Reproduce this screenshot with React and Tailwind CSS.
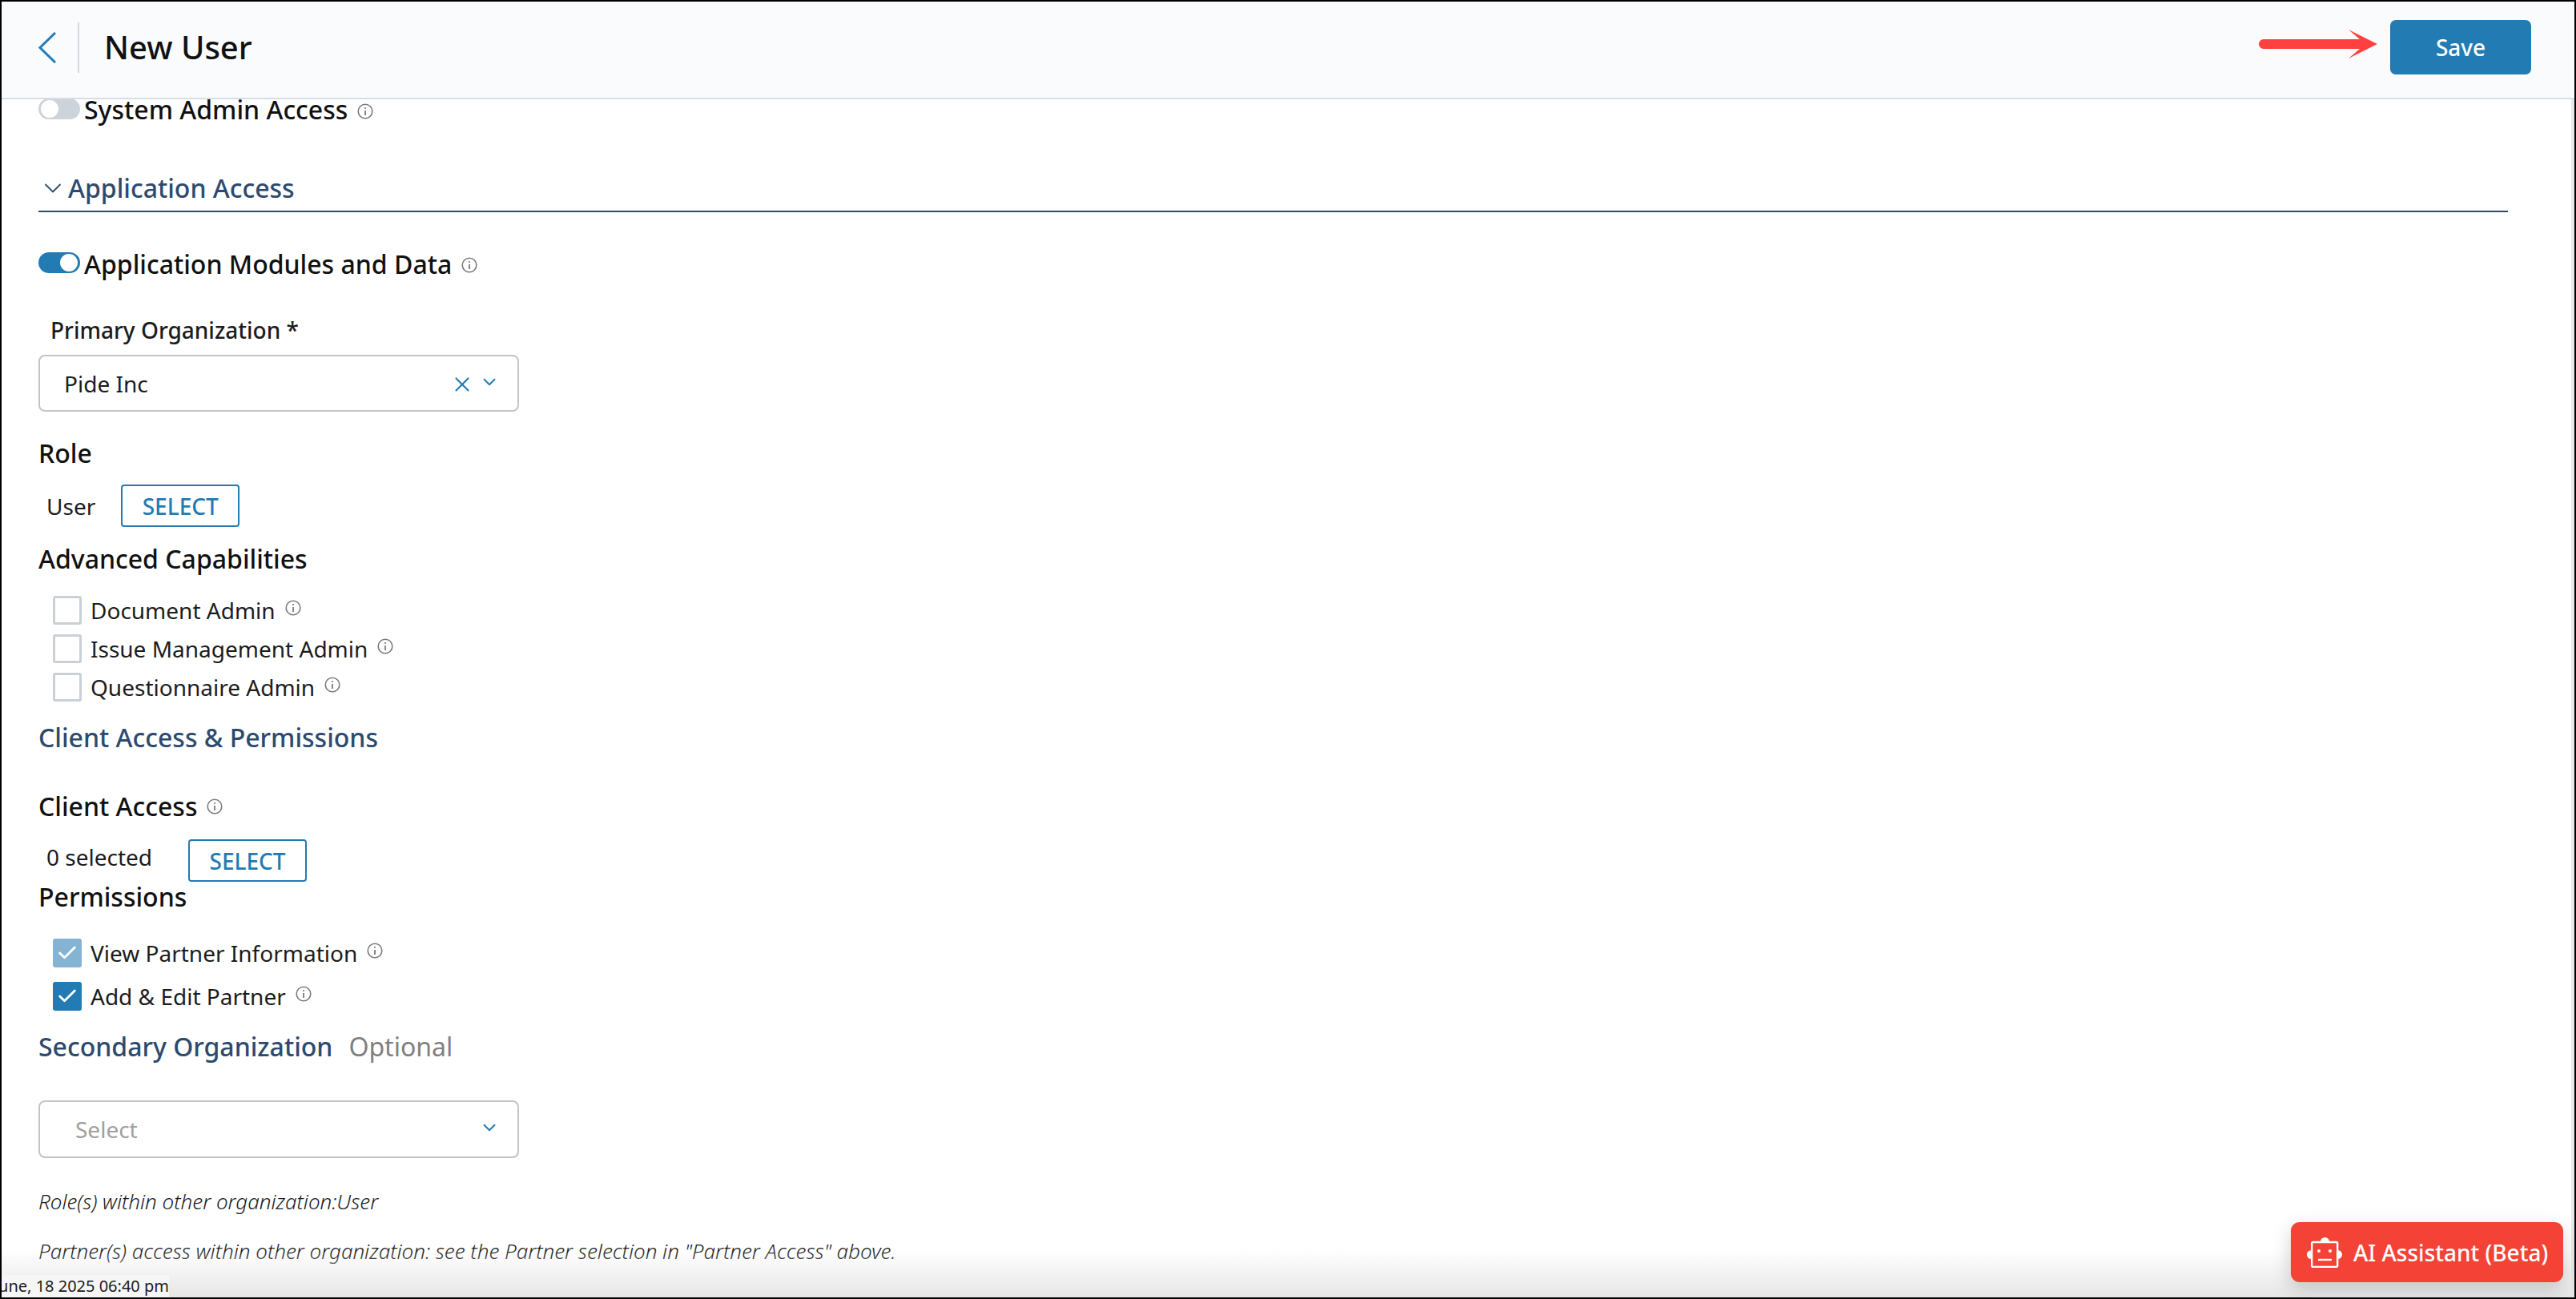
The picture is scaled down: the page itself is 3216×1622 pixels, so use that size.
import { Check, ChevronDown, X } from "lucide-react";

const InfoIcon = ({ className = "" }) => (
  <svg viewBox="0 0 20 20" className={`w-[20px] h-[20px] shrink-0 ${className}`} fill="none" stroke="#7a7a7a">
    <circle cx="10" cy="10" r="8.8" strokeWidth="1.6" />
    <path d="M10 9v6" strokeWidth="1.8" />
    <circle cx="10" cy="6" r="1.1" fill="#7a7a7a" stroke="none" />
  </svg>
);

const RobotIcon = () => (
  <svg viewBox="0 0 44 38" className="w-[44px] h-[38px] shrink-0" fill="none" stroke="white" strokeWidth="2.4">
    <rect x="6.2" y="6" width="32" height="31" rx="1.5" />
    <path d="M17 5.5a5.4 5.4 0 0 1 11 0z" fill="white" stroke="none" />
    <path d="M5.5 16a5.2 5.2 0 0 0 0 11zM38.5 16a5.2 5.2 0 0 1 0 11z" fill="white" stroke="none" />
    <circle cx="15" cy="17" r="2" fill="white" stroke="none" />
    <circle cx="29" cy="17" r="2" fill="white" stroke="none" />
    <path d="M14 28h17" />
  </svg>
);

const Toggle = ({ on, className = "" }) => (
  <span className={`flex items-center shrink-0 w-[52px] h-[26px] rounded-full px-[3px] ${on ? "bg-[#237bb3] justify-end" : "bg-[#cdd3da] justify-start"} ${className}`}>
    <span className="w-[22px] h-[22px] rounded-full bg-white" />
  </span>
);

const Checkbox = ({ state }) => {
  if (state === "disabled" || state === "checked") {
    return (
      <span className={`flex items-center justify-center w-[36px] h-[36px] rounded-[3px] shrink-0 ${state === "checked" ? "bg-[#237bb3]" : "bg-[#85b3d4]"}`}>
        <Check size={28} color="white" strokeWidth={2.4} />
      </span>
    );
  }
  return <span className="w-[36px] h-[36px] rounded-[3px] border-[3px] border-[#c9d0d8] bg-white shrink-0" />;
};

const CheckRow = ({ label, state, className = "" }) => (
  <div className={`flex items-center h-[36px] pl-[18px] ${className}`}>
    <Checkbox state={state} />
    <span className="ml-[11px] text-[28px] leading-[36px] text-[#1c1c1c]">{label}</span>
    <InfoIcon className="ml-[12px] mb-[6px]" />
  </div>
);

const SelectButton = ({ className = "" }) => (
  <button className={`flex items-center justify-center w-[148px] h-[53px] rounded-[4px] border-2 border-[#237bb3] bg-white text-[28px] font-medium text-[#237bb3] ${className}`}>
    SELECT
  </button>
);

const SubHeading = ({ children, className = "" }) => (
  <div className={`flex items-center h-[40px] text-[32px] leading-[40px] font-medium text-[#111] ${className}`}>{children}</div>
);

export default function App() {
  return (
    <div className="relative flex flex-col h-[1622px] w-full overflow-hidden border-2 border-black bg-white font-['Noto_Sans',sans-serif]">
      <header className="flex items-center h-[122px] shrink-0 pb-[6px] pl-[46px] pr-[54px] bg-[#fafbfd] border-b-2 border-[#d8dde3]">
        <svg viewBox="0 0 22 39" className="w-[22px] h-[39px] shrink-0" fill="none" stroke="#237bb3" strokeWidth="3">
          <path d="M21 1 2 19.5 21 38" />
        </svg>
        <span className="ml-[27px] w-[2px] h-[63px] bg-[#d5d8dc]" />
        <h1 className="ml-[31px] text-[40px] leading-[50px] font-medium text-[#111]">New User</h1>
        <svg viewBox="0 0 148 36" className="ml-auto mb-[8px] w-[148px] h-[36px] shrink-0">
          <path d="M6 12h120L112 0l36 18-36 18 14-12H6a6 6 0 0 1 0-12z" fill="#ff4040" />
        </svg>
        <button className="ml-[16px] w-[176px] h-[68px] rounded-[7px] bg-[#237bb3] text-white text-[28px] font-medium">Save</button>
      </header>

      <div className="flex flex-1 min-h-0">
        <main className="flex-1 min-w-0 overflow-hidden pl-[46px] pr-[79px]">
          <div className="flex items-start h-[26px] text-[32px] leading-[26px] font-medium text-[#111]">
            <Toggle className="-mt-px" />
            <span className="ml-[5px]">System Admin Access</span>
            <InfoIcon className="ml-[12px] mt-[5px]" />
          </div>

          <div className="flex items-center h-[50px] mt-[65px] pb-[8px] border-b-2 border-[#2d4a6e] text-[32px] leading-[40px] font-medium text-[#2d4a6e]">
            <ChevronDown size={36} color="#2d4a6e" strokeWidth={1.2} className="mr-px" />
            Application Access
          </div>

          <div className="flex items-start h-[30px] mt-[50px] text-[32px] leading-[30px] font-medium text-[#111]">
            <Toggle on />
            <span className="ml-[5px]">Application Modules and Data</span>
            <InfoIcon className="ml-[12px] mt-[6px]" />
          </div>

          <div className="h-[40px] mt-[47px] pl-[15px] text-[28px] leading-[40px] font-medium text-[#1c1c1c]">Primary Organization *</div>
          <div className="flex items-center w-[600px] h-[71px] mt-[11px] pl-[30px] pr-[22px] rounded-[8px] border-2 border-[#c4c4c4] text-[28px] text-[#1c1c1c]">
            <span className="flex-1">Pide Inc</span>
            <X size={30} color="#237bb3" strokeWidth={1.7} className="mt-[3px]" />
            <ChevronDown size={26} color="#237bb3" strokeWidth={1.8} className="ml-[6px] mb-[3px]" />
          </div>

          <SubHeading className="mt-[32px]">Role</SubHeading>
          <div className="flex items-center h-[53px] mt-[19px] pl-[10px] text-[28px] text-[#1c1c1c]">
            <span>User</span>
            <SelectButton className="ml-[32px]" />
          </div>

          <SubHeading className="mt-[20px]">Advanced Capabilities</SubHeading>
          <CheckRow className="mt-[26px]" label="Document Admin" />
          <CheckRow className="mt-[12px]" label="Issue Management Admin" />
          <CheckRow className="mt-[12px]" label="Questionnaire Admin" />

          <div className="h-[40px] mt-[25px] text-[32px] leading-[40px] font-medium text-[#2d4a6e]">Client Access &amp; Permissions</div>

          <SubHeading className="mt-[46px]">
            Client Access
            <InfoIcon className="ml-[12px]" />
          </SubHeading>
          <div className="flex items-center h-[53px] mt-[21px] pl-[10px] text-[28px] text-[#1c1c1c]">
            <span className="mb-[10px]">0 selected</span>
            <SelectButton className="ml-[45px]" />
          </div>
          <SubHeading className="-mt-px">Permissions</SubHeading>

          <CheckRow className="mt-[32px]" label="View Partner Information" state="disabled" />
          <CheckRow className="mt-[18px]" label="Add &amp; Edit Partner" state="checked" />

          <div className="flex h-[40px] mt-[25px] text-[32px] leading-[40px]">
            <span className="font-medium text-[#2d4a6e]">Secondary Organization</span>
            <span className="ml-[20px] text-[#808080]">Optional</span>
          </div>

          <div className="flex items-center w-[600px] h-[72px] mt-[47px] pl-[44px] pr-[22px] rounded-[8px] border-2 border-[#c4c4c4] text-[28px] text-[#a0a0a0]">
            <span className="flex-1">Select</span>
            <ChevronDown size={26} color="#237bb3" strokeWidth={1.8} className="mb-[5px]" />
          </div>

          <p className="h-[40px] mt-[34px] text-[26px] leading-[40px] italic font-light text-[#1c1c1c]">Role(s) within other organization:User</p>
          <p className="h-[40px] mt-[22px] text-[26px] leading-[40px] italic font-light text-[#1c1c1c]">Partner(s) access within other organization: see the Partner selection in "Partner Access" above.</p>
        </main>
        <div className="w-[4px] shrink-0 bg-[#e9e9e9]" />
      </div>

      {/* bottom fade, timestamp and assistant float over the page */}
      <div className="absolute left-0 right-0 bottom-0 h-[60px] bg-gradient-to-b from-white/0 to-[#e6e6e6]" />
      <div className="absolute left-0 bottom-0 flex justify-end items-center w-[209px] h-[28px] overflow-hidden bg-[#f6f6f6] text-[20px] leading-[28px] text-[#1c1c1c] whitespace-nowrap">
        June, 18 2025 06:40 pm
      </div>
      <button className="absolute right-[14px] bottom-[19px] flex items-center w-[340px] h-[75px] pl-[20px] rounded-[11px] bg-[#f44336] shadow-[0_8px_24px_rgba(0,0,0,0.18)] text-white text-[28px] font-medium">
        <RobotIcon />
        <span className="ml-[14px] whitespace-nowrap">AI Assistant (Beta)</span>
      </button>
    </div>
  );
}
